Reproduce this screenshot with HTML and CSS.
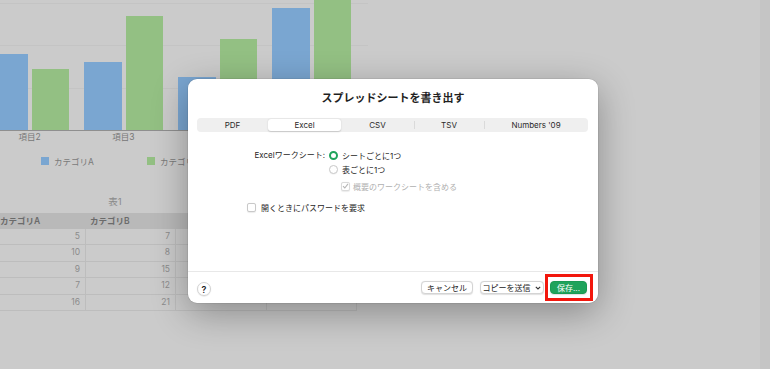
FILE: index.html
```html
<!DOCTYPE html>
<html lang="ja">
<head>
<meta charset="utf-8">
<title>スプレッドシートを書き出す</title>
<link rel="stylesheet" href="styles.css">
</head>
<body>
<div class="screen">
  <main class="doc">
    <section class="chart">
      <div class="plot">
        <div class="group"><div class="bar a" style="height:76px"></div><div class="bar b" style="height:61px"></div></div>
        <div class="group"><div class="bar a" style="height:68px"></div><div class="bar b" style="height:114px"></div></div>
        <div class="group"><div class="bar a" style="height:53px"></div><div class="bar b" style="height:91px"></div></div>
        <div class="group"><div class="bar a" style="height:122px"></div><div class="bar b" style="height:160px"></div></div>
      </div>
      <div class="xlabels">
        <span>項目2</span><span>項目3</span><span>項目4</span><span>項目5</span>
      </div>
      <div class="legend">
        <div class="legend-item"><i class="swatch a"></i>カテゴリA</div>
        <div class="legend-item"><i class="swatch b"></i>カテゴリB</div>
      </div>
    </section>
    <section class="table-wrap">
      <div class="table-title">表1</div>
      <div class="sheet-table">
        <div class="th"></div><div class="th">カテゴリA</div><div class="th">カテゴリB</div><div class="th"></div><div class="th"></div>
        <div class="td rh"></div><div class="td">5</div><div class="td">7</div><div class="td"></div><div class="td"></div>
        <div class="td rh"></div><div class="td">10</div><div class="td">8</div><div class="td"></div><div class="td"></div>
        <div class="td rh"></div><div class="td">9</div><div class="td">15</div><div class="td"></div><div class="td"></div>
        <div class="td rh"></div><div class="td">7</div><div class="td">12</div><div class="td"></div><div class="td"></div>
        <div class="td rh"></div><div class="td">16</div><div class="td">21</div><div class="td"></div><div class="td"></div>
      </div>
    </section>
  </main>
  <aside class="strip"></aside>

  <div class="dialog">
    <div class="dlg-title">スプレッドシートを書き出す</div>
    <div class="tabs">
      <div class="tab w71">PDF</div>
      <div class="tab w73 selected">Excel</div>
      <div class="tab w73">CSV</div>
      <div class="tab w70 sep">TSV</div>
      <div class="tab wrest sep">Numbers '09</div>
    </div>
    <div class="form">
      <div class="form-label">Excelワークシート:</div>
      <div class="options">
        <div class="opt"><span class="radio on"></span>シートごとに1つ</div>
        <div class="opt"><span class="radio"></span>表ごとに1つ</div>
        <div class="opt sub disabled"><span class="check checked"><svg width="7" height="6" viewBox="0 0 7 6"><polyline points="1,3.2 2.8,5 6,0.8" fill="none" stroke="#b5b5b5" stroke-width="1.1"/></svg></span>概要のワークシートを含める</div>
      </div>
    </div>
    <div class="pw-row"><span class="check"></span>開くときにパスワードを要求</div>
    <div class="footer">
      <div class="help">?</div>
      <div class="buttons">
        <div class="btn w52">キャンセル</div>
        <div class="btn w64">コピーを送信<svg class="chev" width="6" height="4" viewBox="0 0 6 4"><polyline points="0.8,0.8 3,3 5.2,0.8" fill="none" stroke="#333" stroke-width="1.1"/></svg></div>
        <div class="btn primary w37">保存...</div>
      </div>
    </div>
  </div>
  <div class="highlight"></div>
</div>
</body>
</html>
```

FILE: styles.css
```css
* { box-sizing: border-box; }
html, body { margin: 0; padding: 0; }
body {
  width: 770px;
  height: 369px;
  overflow: hidden;
  background: #cbcbcb;
  font-family: "Inter", "Noto Sans CJK JP", "Noto Sans", sans-serif;
}
.screen {
  position: relative;
  display: flex;
  width: 770px;
  height: 369px;
  overflow: hidden;
}
.doc {
  flex: 1;
  overflow: hidden;
  background: #cbcbcb;
}
.strip {
  width: 10px;
  background: #c5c5c5;
}

/* chart */
.plot {
  display: flex;
  align-items: flex-end;
  gap: 15px;
  width: 378px;
  height: 131px;
  margin-left: -10px;
  overflow: hidden;
  border-bottom: 1px solid #8f8f8f;
  background: repeating-linear-gradient(to top, transparent 0 41.5px, #c4c4c4 41.5px 42.5px);
}
.group {
  display: flex;
  align-items: flex-end;
  gap: 4px;
  width: 79px;
  flex: none;
}
.bar { flex: 1; }
.bar.a { background: #7aa6d1; }
.bar.b { background: #93c083; }
.xlabels {
  display: flex;
  gap: 15px;
  margin-left: -10px;
  height: 12px;
}
.xlabels span {
  width: 79px;
  flex: none;
  text-align: center;
  font-size: 8.5px;
  line-height: 12px;
  color: #777;
}
.legend {
  display: flex;
  margin-top: 12px;
  padding-left: 41px;
  height: 12px;
}
.legend-item {
  width: 106px;
  flex: none;
  display: flex;
  align-items: center;
  gap: 5px;
  font-size: 8.5px;
  color: #7a7a7a;
}
.swatch { width: 8px; height: 8px; display: block; }
.swatch.a { background: #7aa6d1; }
.swatch.b { background: #93c083; }

/* table */
.table-wrap {
  margin-top: 28px;
  margin-left: -127px;
  width: 484px;
}
.table-title {
  text-align: center;
  font-size: 9.5px;
  line-height: 14px;
  color: #8a8a8a;
  height: 14px;
}
.sheet-table {
  margin-top: 4px;
  display: grid;
  grid-template-columns: 123px 90px 90px 91px 90px;
  grid-template-rows: 16px repeat(5, 16.4px);
}
.th {
  background: #b9b9b9;
  font-size: 8.5px;
  font-weight: 600;
  color: #6b6b6b;
  line-height: 16px;
  padding-left: 4px;
}
.td {
  border-bottom: 1px solid #bdbdbd;
  border-right: 1px solid #bdbdbd;
  font-size: 8.5px;
  color: #8b8b8b;
  text-align: right;
  padding-right: 5px;
  line-height: 15.4px;
}

/* dialog */
.dialog {
  position: absolute;
  left: 188px;
  top: 79px;
  width: 410px;
  height: 224px;
  background: #fff;
  border-radius: 9px;
  box-shadow: 0 0 0 0.5px rgba(0,0,0,0.12), 0 10px 36px rgba(0,0,0,0.32);
  display: flex;
  flex-direction: column;
  color: #262626;
}
.dlg-title {
  margin-top: 12px;
  height: 14px;
  line-height: 14px;
  text-align: center;
  font-size: 11px;
  font-weight: 600;
  color: #1f1f1f;
}
.tabs {
  margin: 13px 10px 0 9px;
  height: 14px;
  background: #efefef;
  border-radius: 4px;
  display: flex;
  align-items: stretch;
  padding: 1px 0;
}
.tab {
  position: relative;
  font-size: 8px;
  line-height: 12px;
  text-align: center;
  color: #2a2a2a;
  flex: none;
}
.tab.w71 { width: 71px; }
.tab.w73 { width: 73px; }
.tab.w70 { width: 70px; }
.tab.wrest { flex: 1; }
.tab.selected {
  background: #fff;
  border-radius: 3px;
  box-shadow: 0 0.5px 1.5px rgba(0,0,0,0.18);
}
.tab.sep::before {
  content: "";
  position: absolute;
  left: 0;
  top: 2px;
  height: 8px;
  border-left: 1px solid #dadada;
}

.form {
  margin-top: 17px;
  display: grid;
  grid-template-columns: 137px auto;
  column-gap: 4px;
  font-size: 8px;
}
.form-label {
  text-align: right;
  line-height: 13.5px;
  color: #262626;
}
.options { display: flex; flex-direction: column; }
.opt {
  display: flex;
  align-items: center;
  gap: 4px;
  height: 13.5px;
}
.opt.sub {
  margin-top: 3.5px;
  padding-left: 12px;
  gap: 3px;
}
.opt.disabled { color: #b0b0b0; }
.radio {
  width: 9px;
  height: 9px;
  border-radius: 50%;
  border: 0.6px solid #c9c9c9;
  background: #fff;
  box-shadow: 0 0.5px 1px rgba(0,0,0,0.08);
  flex: none;
}
.radio.on {
  border: 2.6px solid #21a45c;
  box-shadow: none;
}
.check {
  width: 9px;
  height: 9px;
  border-radius: 2px;
  border: 0.6px solid #c9c9c9;
  background: #fff;
  box-shadow: 0 0.5px 1px rgba(0,0,0,0.08);
  flex: none;
  display: flex;
  align-items: center;
  justify-content: center;
}
.check.checked { border-color: #dadada; }
.pw-row {
  margin-top: 8px;
  margin-left: 59px;
  display: flex;
  align-items: center;
  gap: 5px;
  height: 13px;
  font-size: 8px;
  color: #262626;
}
.footer {
  margin-top: auto;
  height: 32px;
  border-top: 1px solid #e8e8e8;
  display: flex;
  align-items: center;
  justify-content: space-between;
  padding: 0 11px 0 9px;
}
.help {
  width: 14px;
  height: 14px;
  border-radius: 50%;
  border: 0.6px solid #d2d2d2;
  box-shadow: 0 0.5px 1px rgba(0,0,0,0.15);
  font-size: 9px;
  font-weight: 600;
  text-align: center;
  line-height: 13px;
  color: #222;
  margin-top: 2px;
}
.buttons {
  display: flex;
  gap: 6.5px;
  align-items: center;
}
.btn {
  height: 13px;
  border-radius: 4px;
  background: #fff;
  border: 0.6px solid #d4d4d4;
  box-shadow: 0 0.5px 1px rgba(0,0,0,0.12);
  font-size: 8px;
  line-height: 12px;
  text-align: center;
  color: #222;
  display: flex;
  align-items: center;
  justify-content: center;
  gap: 4px;
}
.btn.w52 { width: 52px; }
.btn.w64 { width: 64px; }
.btn.w37 { width: 37px; }
.btn.primary {
  background: #1fa35b;
  border-color: #1a9a53;
  color: #fff;
}
.chev { display: block; }
.highlight {
  position: absolute;
  left: 545px;
  top: 274px;
  width: 48px;
  height: 27px;
  border: 3px solid #f2170d;
}
```
